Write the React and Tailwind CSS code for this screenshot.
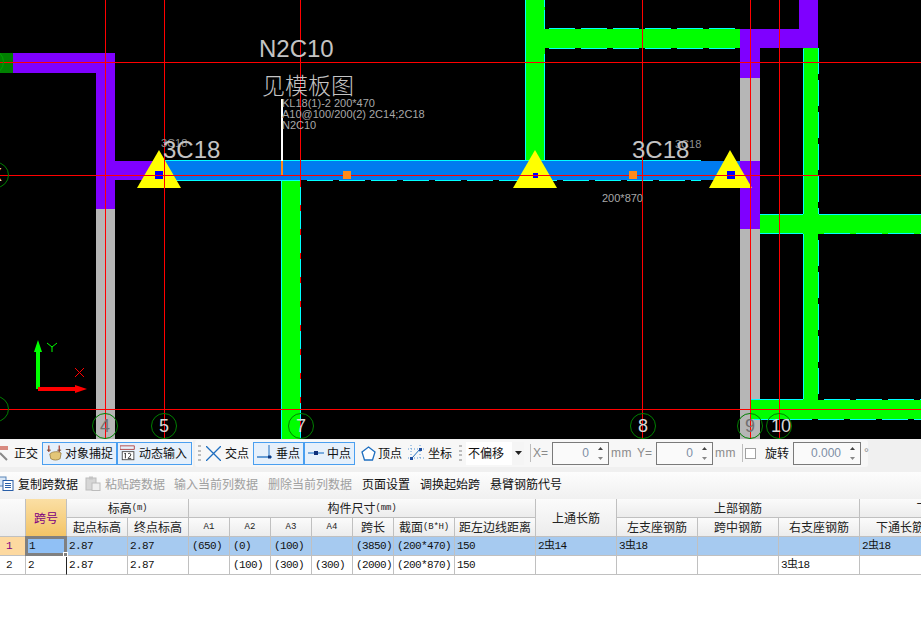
const CJK = { fontFamily: '"Noto Sans CJK SC", "Liberation Sans", sans-serif' };
const MONO = { fontFamily: '"Liberation Mono", "Noto Sans CJK SC", monospace' };

function Dashes({ x1, x2, y, v, len = 26, gap = 6, color = "#00ffff" }) {
  const out = [];
  for (let p = x1; p < x2; p += len + gap) {
    const e = Math.min(p + len, x2);
    out.push(v ? <line key={p} x1={y} x2={y} y1={p} y2={e} stroke={color} /> : <line key={p} x1={p} x2={e} y1={y} y2={y} stroke={color} />);
  }
  return <g>{out}</g>;
}

function Axis({ x, n, dim }) {
  return (
    <g>
      <circle cx={x} cy={426} r={12.5} fill="none" stroke="#008000" />
      <text x={x + (n === "10" ? 2 : 0)} y={432} textAnchor="middle" fontSize="18" fill={dim ? "#707070" : "#d8d8d8"} fontFamily="Liberation Sans">{n}</text>
    </g>
  );
}

function Canvas() {
  const B = "#7f00ff", G = "#00ff00", S = "#b6b6b6", C = "#00ffff", R = "#ff0000", T = "#c4c4c4";
  return (
    <svg width="921" height="439" viewBox="0 0 921 439" className="block bg-black shrink-0">
      {/* left frame */}
      <rect x="13" y="53" width="102" height="20" fill={B} />
      <rect x="0" y="53" width="13" height="20" fill="#008000" />
      <rect x="96" y="53" width="19" height="156" fill={B} />
      <rect x="96" y="209" width="19" height="230" fill={S} />
      <rect x="115" y="161" width="45" height="19" fill={B} />
      {/* top green */}
      <rect x="525" y="0" width="20" height="161" fill={G} />
      <rect x="545" y="29" width="195" height="19" fill={G} />
      <Dashes x1={549} x2={735} y={28.5} />
      <Dashes x1={549} x2={735} y={48.5} />
      <line x1="525.5" x2="525.5" y1="0" y2="160" stroke={C} />
      <line x1="544.5" x2="544.5" y1="0" y2="7" stroke={C} />
      <line x1="544.5" x2="544.5" y1="10" y2="29" stroke={C} />
      <line x1="544.5" x2="544.5" y1="54" y2="160" stroke={C} />
      {/* right frame */}
      <rect x="740" y="29" width="78" height="19" fill={B} />
      <rect x="799" y="0" width="19" height="48" fill={B} />
      <rect x="740" y="29" width="20" height="49" fill={B} />
      <rect x="740" y="78" width="20" height="83" fill={S} />
      <rect x="740" y="161" width="20" height="68" fill={B} />
      <rect x="740" y="229" width="20" height="210" fill={S} />
      {/* right green */}
      <rect x="803" y="48" width="15" height="352" fill={G} />
      <line x1="803.5" x2="803.5" y1="49" y2="399" stroke={C} />
      <Dashes x1={48} x2={396} y={818.5} v />
      <rect x="760" y="214" width="161" height="20" fill={G} />
      <line x1="760" x2="803" y1="214.5" y2="214.5" stroke={C} />
      <line x1="819" x2="921" y1="214.5" y2="214.5" stroke={C} />
      <line x1="760" x2="803" y1="233.5" y2="233.5" stroke={C} />
      <Dashes x1={824} x2={921} y={233.5} />
      <rect x="751" y="400" width="170" height="19" fill={G} />
      <line x1="751" x2="803" y1="399.5" y2="399.5" stroke={C} />
      <Dashes x1={824} x2={921} y={399.5} />
      <Dashes x1={754} x2={921} y={419.5} />
      {/* mid column */}
      <rect x="281" y="181" width="20" height="258" fill={G} />
      <line x1="281.5" x2="281.5" y1="181" y2="439" stroke={C} />
      <line x1="300.5" x2="300.5" y1="181" y2="439" stroke={C} />
      {/* beam */}
      <rect x="160" y="161" width="580" height="19" fill="#007bef" />
      <line x1="159" x2="701" y1="160.5" y2="160.5" stroke={C} />
      <line x1="159" x2="300" y1="180.5" y2="180.5" stroke={C} />
      <Dashes x1={307} x2={701} y={180.5} />
      {/* marks */}
      <rect x="281" y="161" width="2" height="14" fill="#ff8a1a" />
      <rect x="281" y="99" width="2" height="62" fill="#ffffff" />
      {/* supports */}
      <polygon points="159,150 181,188 137,188" fill="#ffff00" />
      <polygon points="535,150 557,188 513,188" fill="#ffff00" />
      <polygon points="730,150 752,188 709,188" fill="#ffff00" />
      <rect x="155" y="171" width="8" height="8" fill="#0000ff" />
      <rect x="533" y="173" width="5" height="5" fill="#0000ff" />
      <rect x="727" y="171" width="8" height="8" fill="#0000ff" />
      {/* grid */}
      <g stroke={R} shapeRendering="crispEdges">
        <line x1="105.5" x2="105.5" y1="0" y2="439" />
        <line x1="164.5" x2="164.5" y1="0" y2="439" />
        <line x1="300.5" x2="300.5" y1="0" y2="181" />
        <line x1="300.5" x2="300.5" y1="181" y2="439" strokeDasharray="6 18" />
        <line x1="642.5" x2="642.5" y1="0" y2="439" />
        <line x1="750.5" x2="750.5" y1="0" y2="439" />
        <line x1="779.5" x2="779.5" y1="0" y2="439" />
        <line x1="0" x2="921" y1="62.5" y2="62.5" />
        <line x1="0" x2="921" y1="175.5" y2="175.5" />
        <line x1="0" x2="921" y1="409.5" y2="409.5" />
      </g>
      <rect x="343" y="171" width="8" height="8" fill="#ff8a1a" />
      <rect x="629" y="171" width="8" height="8" fill="#ff8a1a" />
      {/* labels */}
      <g fontFamily="Liberation Sans" fill={T}>
        <text x="259" y="57" fontSize="24">N2C10</text>
        <text x="262" y="94" fontSize="23" fontFamily="Noto Sans CJK SC" fontWeight="300">见模板图</text>
        <g fontSize="11" fill="#a8a8a8">
          <text x="282" y="107">KL18(1)-2 200*470</text>
          <text x="282" y="118">A10@100/200(2) 2C14;2C18</text>
          <text x="282" y="129">N2C10</text>
          <text x="161" y="147" fill="#909090">3C18</text>
          <text x="675" y="148" fill="#909090">3C18</text>
        </g>
        <text x="163" y="158" fontSize="24">3C18</text>
        <text x="632" y="158" fontSize="24">3C18</text>
        <text x="602" y="202" fontSize="11" fill="#a8a8a8">200*870</text>
      </g>
      {/* axis numbers */}
      <Axis x={105} n="4" dim />
      <Axis x={164} n="5" />
      <Axis x={301} n="7" />
      <Axis x={643} n="8" />
      <Axis x={750} n="9" dim />
      <Axis x={779} n="10" />
      <circle cx="-4" cy="175" r="12.5" fill="none" stroke="#008000" />
      <circle cx="-4" cy="409" r="12.5" fill="none" stroke="#008000" />
      <circle cx="-9" cy="62" r="12.5" fill="none" stroke="#00a000" />
      <text x="-4" y="181" textAnchor="middle" fontSize="18" fill="#d8d8d8" fontFamily="Liberation Sans">X</text>
      {/* UCS */}
      <rect x="36" y="350" width="4" height="39" fill={G} />
      <polygon points="38,340 42,352 34,352" fill={G} />
      <polyline points="47,343 52,347 57,343" fill="none" stroke={G} />
      <line x1="52" x2="52" y1="347" y2="352" stroke={G} />
      <rect x="38" y="387" width="40" height="4" fill={R} />
      <polygon points="87,389 75,385 75,393" fill={R} />
      <g shapeRendering="crispEdges">
        <line x1="75" y1="368" x2="84" y2="377" stroke={R} />
        <line x1="84" y1="368" x2="75" y2="377" stroke={R} />
      </g>
    </svg>
  );
}

function Grip() {
  return (
    <div className="w-[3px] h-[16px] mx-[3px] shrink-0 flex flex-col justify-between">
      <span className="h-[2px] bg-[#bdbdbd]" />
      <span className="h-[2px] bg-[#bdbdbd]" />
      <span className="h-[2px] bg-[#bdbdbd]" />
      <span className="h-[2px] bg-[#bdbdbd]" />
    </div>
  );
}

const Ico = {
  snap: (
    <svg width="18" height="18" viewBox="0 0 18 18">
      <path d="M3 1v7M14 1v7" stroke="#a03020" strokeWidth="1.2" />
      <path d="M1 6h4M12 6h4" stroke="#704020" />
      <path d="M4 10c3-3 9-3 12-1l-1 6c-3 2-7 2-10 0z" fill="#e3c678" stroke="#8a6a2a" strokeWidth=".7" />
    </svg>
  ),
  input: (
    <svg width="19" height="18" viewBox="0 0 19 18">
      <path d="M0 1h16M0 5h16" stroke="#b04040" />
      <path d="M0 1v4M16 1v4" stroke="#b04040" />
      <rect x="2.500" y="7.500" width="13" height="9" fill="#fff" stroke="#444" />
      <path d="M5 10l1-1v6M9 10c1-1 3-1 3 1s-3 3-3 4h3.500" fill="none" stroke="#222" />
    </svg>
  ),
  cross: (
    <svg width="15" height="15" viewBox="0 0 15 15"><path d="M0 0l15 15M15 0L0 15" stroke="#1f6fc0" strokeWidth="1.3" /></svg>
  ),
  perp: (
    <svg width="16" height="16" viewBox="0 0 16 16"><path d="M0 12h15" stroke="#1f6fc0" strokeWidth="1.3" /><path d="M12 0v12" stroke="#1f6fc0" /><rect x="11" y="10.500" width="3" height="3" fill="#123a80" /></svg>
  ),
  mid: (
    <svg width="16" height="10" viewBox="0 0 16 10"><path d="M0 5h16" stroke="#3d86d0" strokeWidth="1.3" /><rect x="6" y="3" width="4" height="4" fill="#10307a" /></svg>
  ),
  vertex: (
    <svg width="15" height="15" viewBox="0 0 15 15"><path d="M7.500 1L14 6l-2.500 8h-8L1 6z" fill="#fff" stroke="#1f6fc0" strokeWidth="1.300" /></svg>
  ),
  coord: (
    <svg width="18" height="18" viewBox="0 0 18 18">
      <path d="M3 1v15M12 1v15M0 5h17M0 14h17" stroke="#5a9ad8" strokeDasharray="1 2" />
      <path d="M4 14l8-9" stroke="#1f6fc0" />
      <rect x="2" y="13" width="3" height="3" fill="#1f4fa0" /><rect x="11" y="4" width="3" height="3" fill="#1f4fa0" />
    </svg>
  ),
  copy: (
    <svg width="14" height="15" viewBox="0 0 14 15">
      <rect x="-3" y="1" width="9" height="9" fill="#dbe8f7" stroke="#5a86b8" />
      <rect x="3" y="4.500" width="10" height="10" fill="#fff" stroke="#2a5fa8" />
      <path d="M5 7.500h6M5 9.500h6M5 11.500h6" stroke="#2a5fa8" />
    </svg>
  ),
  paste: (
    <svg width="16" height="15" viewBox="0 0 16 15">
      <rect x="1" y="2" width="10" height="12" fill="#d6d6d6" stroke="#bcbcbc" />
      <rect x="4" y="0.500" width="4" height="3" fill="#c4c4c4" />
      <rect x="7" y="7" width="8" height="7.500" fill="#efefef" stroke="#bcbcbc" />
    </svg>
  ),
};

function SnapBtn({ w, icon, label, on, iw = 16, pl = 3, gap = 3 }) {
  return (
    <div className={on ? "h-[23px] flex items-center shrink-0 border border-[#4a9ff0] bg-[#e6f0fb]" : "h-[23px] flex items-center shrink-0 border border-transparent"} style={{ width: w, paddingLeft: pl, gap }}>
      <span className="flex items-center justify-center shrink-0" style={{ width: iw }}>{icon}</span>
      <span className="text-[12px] leading-none text-[#111] whitespace-nowrap">{label}</span>
    </div>
  );
}

function Field({ w, val }) {
  return (
    <div className="h-[23px] border border-[#7a7a7a] bg-[#fafafa] flex items-center shrink-0" style={{ width: w }}>
      <span className="flex-1 text-right pr-[4px] text-[12px] text-[#7d8ea5]" style={{ fontFamily: "Liberation Sans" }}>{val}</span>
      <span className="w-[15px] flex flex-col items-center gap-[7px]">
        <svg width="5" height="3" viewBox="0 0 5 3"><path d="M2.500 0L5 3H0z" fill="#444" /></svg>
        <svg width="5" height="3" viewBox="0 0 5 3"><path d="M2.500 3L5 0H0z" fill="#888" /></svg>
      </span>
    </div>
  );
}

function Toolbar() {
  return (
    <div className="h-[33px] shrink-0 bg-[#f0f0f0] flex items-center pb-[5px]" style={CJK}>
      <div className="h-[27px] w-[193px] bg-[#f7f7f7] flex items-center shrink-0">
        <div className="w-[42px] h-[23px] flex items-center shrink-0">
          <svg width="11" height="16" viewBox="0 0 11 16" className="shrink-0"><rect x="-2" y="1" width="10" height="4" fill="#d88a80" /><path d="M0 8l7 7" stroke="#888" strokeWidth="2" /></svg>
          <span className="text-[12px] leading-none ml-[3px] text-[#111] whitespace-nowrap">正交</span>
        </div>
        <SnapBtn w={75} iw={17} gap={2} icon={Ico.snap} label="对象捕捉" on />
        <SnapBtn w={75} iw={17} gap={2} pl={2} icon={Ico.input} label="动态输入" on />
      </div>
      <div className="h-[27px] ml-[2px] w-[673px] rounded-[3px] bg-[#f7f7f7] flex items-center shrink-0">
        <Grip />
        <SnapBtn w={49} iw={15} pl={1} gap={4} icon={Ico.cross} label="交点" />
        <SnapBtn w={51} icon={Ico.perp} label="垂点" on />
        <SnapBtn w={51} icon={Ico.mid} label="中点" on />
        <div className="w-[2px] shrink-0" />
        <SnapBtn w={47} iw={15} gap={2} icon={Ico.vertex} label="顶点" />
        <SnapBtn w={52} iw={18} gap={2} icon={Ico.coord} label="坐标" />
        <Grip />
        <div className="w-[58px] h-[23px] ml-[1px] bg-white flex items-center justify-between shrink-0">
          <span className="text-[12px] pl-[2px] leading-none text-[#111]">不偏移</span>
          <span className="w-[12px] h-full bg-[#f5f5f5] flex items-center justify-center">
            <svg width="7" height="4" viewBox="0 0 7 4"><path d="M0 0h7L3.500 4z" fill="#222" /></svg>
          </span>
        </div>
        <div className="w-[1px] h-[18px] bg-[#bdbdbd] ml-[6px] mr-[2px] shrink-0" />
        <span className="w-[19px] text-[12px] text-[#8a8a8a] shrink-0" style={{ fontFamily: "Liberation Sans" }}>X=</span>
        <Field w={57} val="0" />
        <span className="w-[28px] pl-[2px] text-[12px] tracking-[0.4px] text-[#8a8a8a] shrink-0" style={{ fontFamily: "Liberation Sans" }}>mm</span>
        <span className="w-[19px] text-[12px] text-[#8a8a8a] shrink-0" style={{ fontFamily: "Liberation Sans" }}>Y=</span>
        <Field w={57} val="0" />
        <span className="w-[26px] pl-[2px] text-[12px] tracking-[0.4px] text-[#8a8a8a] shrink-0" style={{ fontFamily: "Liberation Sans" }}>mm</span>
        <div className="w-[1px] h-[18px] bg-[#bdbdbd] ml-[3px] mr-[2px] shrink-0" />
        <div className="w-[11px] h-[11px] border border-[#a0a0a0] bg-white shrink-0" />
        <span className="text-[12px] leading-none ml-[9px] mr-[4px] text-[#111] whitespace-nowrap">旋转</span>
        <Field w={68} val="0.000" />
        <span className="ml-[3px] text-[12px] text-[#8a8a8a]" style={{ fontFamily: "Liberation Sans" }}>°</span>
      </div>
    </div>
  );
}

function ActionBar() {
  const items = [
    { l: "输入当前列数据", w: 94, d: true },
    { l: "删除当前列数据", w: 94, d: true },
    { l: "页面设置", w: 58 },
    { l: "调换起始跨", w: 70 },
    { l: "悬臂钢筋代号", w: 82 },
  ];
  return (
    <div className="h-[27px] shrink-0 bg-gradient-to-b from-[#fdfdfd] to-[#f0f0f0] flex items-center pb-[4px] text-[12px] leading-none whitespace-nowrap" style={CJK}>
      <div className="w-[85px] flex items-center shrink-0">
        <span className="w-[18px] shrink-0">{Ico.copy}</span>
        <span className="text-[#111]">复制跨数据</span>
      </div>
      <div className="w-[84px] flex items-center shrink-0">
        <span className="w-[20px] shrink-0">{Ico.paste}</span>
        <span className="text-[#a0a0a0]">粘贴跨数据</span>
      </div>
      <div className="w-[5px] shrink-0" />
      {items.map((it) => (
        <span key={it.l} className={it.d ? "text-[#a0a0a0] shrink-0" : "text-[#111] shrink-0"} style={{ width: it.w }}>{it.l}</span>
      ))}
    </div>
  );
}

const hdBase = "flex items-center justify-center border-r border-b border-[#c0c0c0] bg-gradient-to-b from-[#fbfbfb] to-[#ececec] leading-none text-[#222] whitespace-nowrap overflow-hidden";
const hd = hdBase + " text-[12px]";

function Unit({ children }) {
  return <span className="text-[9px] tracking-[-0.2px]" style={MONO}>{children}</span>;
}

function Row({ n, vals, sel }) {
  const bg = sel ? "bg-[#a6caf0]" : "bg-white";
  const cell = "flex items-center border-r border-b border-[#c0c0c0] text-[11px] tracking-[-0.6px] leading-none text-[#111] whitespace-nowrap overflow-hidden " + bg;
  return (
    <>
      <div className={"flex items-center pl-[6px] border-r border-b border-[#c0c0c0] text-[11px] leading-none " + (sel ? "bg-[#fdd9a0] text-[#800080]" : "bg-white text-[#222]")} style={MONO}>{n}</div>
      {sel ? (
        <div className="relative -ml-[1px] -mt-[1px] border-[3px] border-[#808080] bg-[#90c0f5] flex items-center pl-[1px] text-[11px] leading-none text-[#111]" style={MONO}>
          {n}
          <span className="absolute -right-[4px] -bottom-[4px] w-[5px] h-[5px] bg-[#808080] border border-white" />
        </div>
      ) : (
        <div className="flex items-center pl-[2px] border-r border-r-[#222] border-b border-b-[#c0c0c0] bg-white text-[11px] leading-none text-[#111]" style={MONO}>{n}</div>
      )}
      {vals.map((v, i) => (
        <div key={i} className={v.startsWith("(") ? cell + " pl-[3px]" : cell + " pl-[2px]"} style={MONO}>{v}</div>
      ))}
    </>
  );
}

function Sheet() {
  return (
    <div className="grid shrink-0 grid-cols-[26px_41px_61px_61px_41px_41px_41px_41px_41px_61px_81px_81px_81px_81px_81px_81px_81px] grid-rows-[19px_19px_19px_19px] w-[1022px]" style={CJK}>
      <div className={hd + " row-span-2"} />
      <div className="row-span-2 flex items-center justify-center border-r border-b border-[#c0c0c0] bg-gradient-to-b from-[#fbdfa4] to-[#f3c465] text-[12px] leading-none text-[#800080]">跨号</div>
      <div className={hd + " col-span-2"}>标高<Unit>(m)</Unit></div>
      <div className={hd + " col-span-7"}>构件尺寸<Unit>(mm)</Unit></div>
      <div className={hd + " row-span-2"}>上通长筋</div>
      <div className={hd + " col-span-3"}>上部钢筋</div>
      <div className={hd + " col-span-2"}>下部钢筋</div>

      <div className={hd}>起点标高</div>
      <div className={hd}>终点标高</div>
      {["A1", "A2", "A3", "A4"].map((a) => (
        <div key={a} className={hdBase + " text-[9px]"} style={MONO}>{a}</div>
      ))}
      <div className={hd}>跨长</div>
      <div className={hd}>截面<Unit>(B*H)</Unit></div>
      <div className={hd}>距左边线距离</div>
      <div className={hd}>左支座钢筋</div>
      <div className={hd}>跨中钢筋</div>
      <div className={hd}>右支座钢筋</div>
      <div className={hd}>下通长筋</div>
      <div className={hd} />

      <Row n="1" sel vals={["2.87", "2.87", "(650)", "(0)", "(100)", "", "(3850)", "(200*470)", "150", "2虫14", "3虫18", "", "", "2虫18", ""]} />
      <Row n="2" vals={["2.87", "2.87", "", "(100)", "(300)", "(300)", "(2000)", "(200*870)", "150", "", "", "", "3虫18", "", ""]} />
    </div>
  );
}

export default function App() {
  return (
    <div className="w-[921px] h-[628px] overflow-hidden bg-white flex flex-col">
      <Canvas />
      <Toolbar />
      <ActionBar />
      <Sheet />
    </div>
  );
}
